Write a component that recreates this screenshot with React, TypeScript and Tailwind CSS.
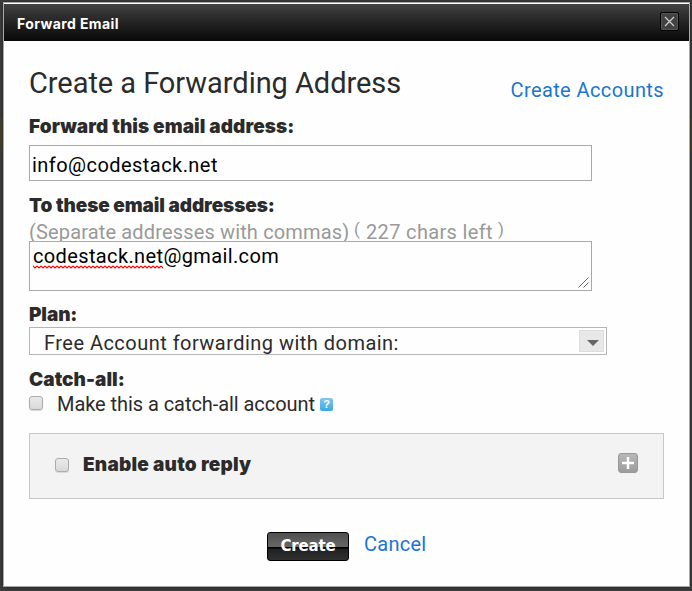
import type { ReactNode } from "react";

const BODY = "font-['Roboto','Liberation_Sans',sans-serif] whitespace-nowrap";

function Label({ className = "", children }: { className?: string; children: ReactNode }) {
  return (
    <div className={`font-['Inter',sans-serif] font-black text-[19px] leading-[26px] whitespace-nowrap text-[#2b2b2b] ${className}`}>
      {children}
    </div>
  );
}

function Checkbox() {
  return (
    <span className="block size-[14px] shrink-0 rounded-[3px] border border-[#acacac] bg-linear-to-b from-[#eaeaea] to-[#d9d9d9] shadow-[0_1px_1px_#d8d8d8]" />
  );
}

export default function App() {
  return (
    <div className="h-[591px] w-[692px] overflow-hidden bg-[linear-gradient(#3d3d3d_0px,#3d3d3d_118px,#48432f_119px,#48432f_151px,#3d3d3d_152px)] pt-[2px] pl-[3px]">
      <div className="flex h-[585px] w-[687px] flex-col border border-[#a9a9a9] bg-[#fefefe] shadow-[0_0_4px_#222222]">
        <header className="flex h-[38px] shrink-0 items-start border-t border-white bg-linear-to-b from-[#424242] to-[#090909] pl-[13px]">
          <span className="mt-[10px] font-['Inter',sans-serif] text-[14px] leading-[20px] font-bold tracking-[0.4px] text-white">
            Forward Email
          </span>
          <button className="mt-[8px] mr-[10px] ml-auto flex size-[19px] items-center justify-center rounded-[2px] border border-black bg-[#424242] shadow-[inset_0_0_0_1px_#555555]">
            <svg width="11" height="11" viewBox="0 0 11 11" fill="none" stroke="#cfcfcf" strokeWidth="1.2">
              <path d="M1 1l9 9M10 1l-9 9" />
            </svg>
          </button>
        </header>

        <main className="flex flex-col pl-[25px]">
          <div className="flex h-[73px] w-[635px] justify-between">
            <h1 className={`${BODY} mt-[24px] text-[29px] leading-[36px] tracking-[-0.05px] text-[#2b2b2b]`}>Create a Forwarding Address</h1>
            <a className={`${BODY} mt-[37px] text-[20px] leading-[24px] tracking-[0.4px] text-[#1976d2]`}>Create Accounts</a>
          </div>
          <Label className="h-[31px] tracking-[0.07px]">Forward this email address:</Label>
          <div className={`${BODY} flex h-[36px] w-[563px] items-center border border-[#a9a9a9] pt-[3px] pl-[2px] text-[20px] tracking-[0.45px] text-black`}>
            info@codestack.net
          </div>
          <Label className="mt-[12px] h-[26px] tracking-[-0.1px]">To these email addresses:</Label>
          <div className={`${BODY} flex h-[22px] text-[20px] leading-[26px] tracking-[0.15px] text-[#999999]`}>
            <span className="w-[325px]">(Separate addresses with commas)</span>
            <span className="relative -top-[3px] w-[12px] text-[17px]">(</span>
            <span className="w-[132px] tracking-[0.35px]">227 chars left</span>
            <span className="relative -top-[3px] text-[17px]">)</span>
          </div>
          <div className={`${BODY} relative h-[50px] w-[563px] border border-[#a9a9a9] bg-[#fefefe] pt-[2px] pl-[3px] text-[20px] leading-[24px] tracking-[0.37px] text-black`}>
            codestack.net@gmail.com
            <svg className="absolute top-[23px] left-[3px]" width="130" height="4" fill="none" stroke="#ff0000">
              <defs>
                <pattern id="wave" width="4" height="4" patternUnits="userSpaceOnUse">
                  <path d="M0 1L2 3L4 1" strokeWidth="1.1" />
                </pattern>
              </defs>
              <rect width="130" height="4" fill="url(#wave)" stroke="none" />
            </svg>
            <svg className="absolute right-[2px] bottom-[2px]" width="11" height="11" stroke="#555555" strokeWidth="0.9">
              <path d="M0.5 10.5L10.5 0.5M5.5 10.5L10.5 5.5" />
            </svg>
          </div>
          <Label className="mt-[11px] h-[25px] tracking-[-0.1px]">Plan:</Label>
          <div className="flex h-[28px] w-[578px] items-center justify-between border border-[#b5b5b5] pr-[2px] pl-[14px]">
            <span className={`${BODY} h-[24px] text-[20px] leading-[28px] tracking-[0.47px] text-[#2b2b2b]`}>
              Free Account forwarding with domain:
            </span>
            <span className="flex h-[22px] w-[25px] items-center justify-center border border-[#dddddd] bg-[#e8e8e8]">
              <svg className="mt-[3px] ml-[3px]" width="12" height="6" fill="#666666">
                <path d="M0 0H12L6 6Z" />
              </svg>
            </span>
          </div>
          <Label className="mt-[12px] h-[25px] tracking-[0.05px]">Catch-all:</Label>
          <div className="flex h-[24px] items-start">
            <div className="mt-[4px]"><Checkbox /></div>
            <span className={`${BODY} ml-[14px] w-[263px] text-[20px] leading-[24px] tracking-[-0.06px] text-[#2b2b2b]`}>
              Make this a catch-all account
            </span>
            <span className="mt-[6px] flex size-[13px] items-center justify-center rounded-[2px] bg-linear-to-b from-[#82c6eb] to-[#36a9e1] font-['Liberation_Sans',sans-serif] text-[11px] leading-none font-bold text-white">
              ?
            </span>
          </div>
          <section className="mt-[17px] flex h-[66px] w-[635px] items-start border border-[#c8c8c8] bg-[#f3f3f3] pl-[25px]">
            <div className="mt-[24px]"><Checkbox /></div>
            <Label className="mt-[18px] ml-[14px] tracking-[0.22px]">Enable auto reply</Label>
            <button className="mt-[19px] mr-[25px] ml-auto flex size-[20px] items-center justify-center rounded-[3px] border border-[#999999] bg-linear-to-b from-[#b8b8b8] to-[#9c9c9c]">
              <svg width="12" height="12" stroke="white" strokeWidth="2.5">
                <path d="M6 0V12M0 6H12" />
              </svg>
            </button>
          </section>
          <div className="mt-[33px] flex pl-[238px]">
            <button className="flex h-[29px] w-[82px] items-center justify-center rounded-[3px] border border-black bg-[linear-gradient(#505050_0%,#666666_50%,#000000_51%,#000000_57%,#202020_58%,#303030_100%)] font-['DejaVu_Sans',sans-serif] text-[15px] leading-none font-bold tracking-[-0.2px] text-white">
              Create
            </button>
            <a className={`${BODY} ml-[15px] text-[20px] leading-[24px] tracking-[0.25px] text-[#1976d2]`}>Cancel</a>
          </div>
        </main>
      </div>
    </div>
  );
}
